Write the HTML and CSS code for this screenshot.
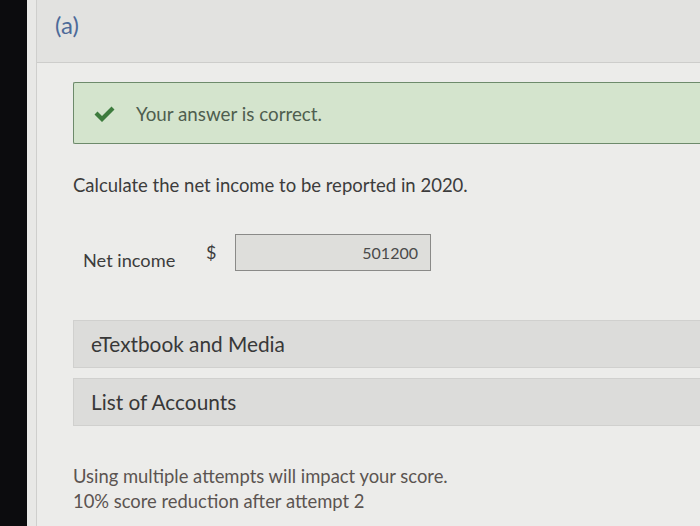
FILE: index.html
```html
<!DOCTYPE html>
<html lang="en">
<head>
  <meta charset="UTF-8">
  <title>Question (a)</title>
  <link rel="stylesheet" href="styles.css">
</head>
<body>
  <div class="frame">
    <div class="bezel"></div>
    <div class="gutter"></div>
    <div class="page">
      <div class="part-header">(a)</div>
      <div class="content">
        <div class="feedback">
          <svg class="check" width="23" height="19" viewBox="0 0 23 19">
            <path d="M1.5 10.5 L4.5 7.5 L9 12 L18.5 2.5 L21.5 5.5 L9 18 Z" fill="#3d7b3d"/>
          </svg>
          <span>Your answer is correct.</span>
        </div>
        <p class="prompt">Calculate the net income to be reported in 2020.</p>
        <div class="answer-row">
          <span class="answer-label">Net income</span>
          <span class="currency">$</span>
          <div class="answer-box">501200</div>
        </div>
        <div class="resource">eTextbook and Media</div>
        <div class="resource">List of Accounts</div>
        <p class="attempts">Using multiple attempts will impact your score.<br>10% score reduction after attempt 2</p>
      </div>
    </div>
  </div>
</body>
</html>
```

FILE: styles.css
```css
body {
  margin: 0;
  font-family: Lato, 'Liberation Sans', Arial, sans-serif;
  background: #ebebea;
  overflow: hidden;
}
.frame {
  display: flex;
  height: 526px;
}
.bezel {
  width: 27px;
  background: #0c0c0e;
  flex-shrink: 0;
}
.gutter {
  width: 9px;
  background: #e8e8e6;
  border-right: 1px solid #cfcfcd;
  flex-shrink: 0;
}
.page {
  flex: 1;
  background: #ececea;
}
.part-header {
  height: 63px;
  background: #e2e2e0;
  border-bottom: 1px solid #cdcdcb;
  box-sizing: border-box;
  padding: 10px 0 0 18px;
  font-size: 24px;
  line-height: 30px;
  color: #4c6a99;
}
.content {
  padding: 19px 0 0 36px;
}
.feedback {
  display: flex;
  align-items: center;
  height: 62px;
  box-sizing: border-box;
  background: #d4e4cd;
  border: 1px solid #6d8a6b;
  border-right: none;
  border-radius: 2px 0 0 2px;
  padding-left: 19px;
  font-size: 18.8px;
  color: #4f5e4f;
}
.check {
  margin-right: 20px;
}
.prompt {
  margin: 30px 0 0;
  font-size: 18.5px;
  line-height: 22px;
  color: #3c3c3c;
}
.answer-row {
  display: flex;
  align-items: flex-start;
  margin-top: 37px;
  padding-left: 10px;
  color: #3c3c3c;
}
.answer-label {
  font-size: 18.2px;
  line-height: 22px;
  margin-top: 16px;
  width: 123px;
}
.currency {
  font-size: 18px;
  line-height: 22px;
  margin-top: 8px;
  width: 29px;
}
.answer-box {
  width: 196px;
  height: 37px;
  box-sizing: border-box;
  margin-top: 1px;
  border: 1px solid #8a8a88;
  background: #dededb;
  text-align: right;
  padding: 8px 12px 0 0;
  font-size: 16px;
  line-height: 20px;
  color: #4a4a4a;
}
.resource {
  height: 48px;
  box-sizing: border-box;
  margin-top: 49px;
  background: #dcdcda;
  border: 1px solid #d0d0ce;
  border-right: none;
  padding: 11px 0 0 17px;
  font-size: 20.8px;
  line-height: 24px;
  color: #383838;
}
.resource + .resource {
  margin-top: 10px;
}
.attempts {
  margin: 38px 0 0;
  font-size: 18.4px;
  line-height: 25px;
  color: #5b5451;
}
```
